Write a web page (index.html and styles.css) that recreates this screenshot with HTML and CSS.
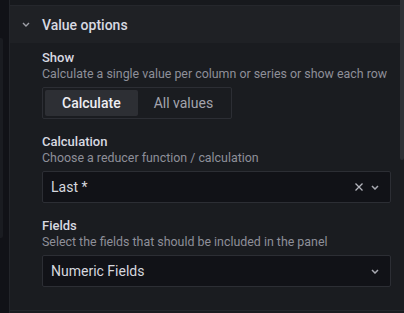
FILE: index.html
```html
<!DOCTYPE html>
<html lang="en">
<head>
    <meta charset="UTF-8">
    <meta name="viewport" content="width=device-width, initial-scale=1.0">
    <title>Value options</title>
    <link rel="stylesheet" href="styles.css">
</head>
<body>
    <div class="page">
        <div class="side">
            <div class="side-card"></div>
        </div>

        <div class="pane">
            <div class="pane-top"></div>

            <div class="category">
                <div class="category-header">
                    <svg class="chevron" width="8" height="5" viewBox="0 0 8 5">
                        <path d="M1 1 L4 4 L7 1" fill="none" stroke="#9fa0a8" stroke-width="1.4"/>
                    </svg>
                    <span>Value options</span>
                </div>

                <div class="category-body">
                    <div class="field">
                        <div class="field-label">Show</div>
                        <div class="field-desc">Calculate a single value per column or series or show each row</div>
                        <div class="radio-group">
                            <button class="radio active">Calculate</button>
                            <button class="radio">All values</button>
                        </div>
                    </div>

                    <div class="field">
                        <div class="field-label">Calculation</div>
                        <div class="field-desc">Choose a reducer function / calculation</div>
                        <div class="select">
                            <span class="select-value">Last *</span>
                            <svg class="select-clear" width="8" height="8" viewBox="0 0 8 8">
                                <path d="M0.5 0.5 L7.5 7.5 M7.5 0.5 L0.5 7.5" stroke="#b4b5bd" stroke-width="1.3"/>
                            </svg>
                            <svg class="select-arrow" width="8" height="5" viewBox="0 0 8 5">
                                <path d="M1 1 L4 4 L7 1" fill="none" stroke="#a8a9b1" stroke-width="1.5"/>
                            </svg>
                        </div>
                    </div>

                    <div class="field">
                        <div class="field-label">Fields</div>
                        <div class="field-desc">Select the fields that should be included in the panel</div>
                        <div class="select">
                            <span class="select-value">Numeric Fields</span>
                            <svg class="select-arrow" width="8" height="5" viewBox="0 0 8 5">
                                <path d="M1 1 L4 4 L7 1" fill="none" stroke="#a8a9b1" stroke-width="1.5"/>
                            </svg>
                        </div>
                    </div>
                </div>
            </div>

            <div class="scrollbar"></div>
        </div>
    </div>
</body>
</html>
```

FILE: styles.css
```css
body {
    margin: 0;
    background-color: #111217;
    font-family: Roboto, "Liberation Sans", sans-serif;
    font-size: 14px;
    color: #ccccdc;
}
.page {
    display: flex;
    height: 313px;
    overflow: hidden;
}
.side {
    width: 9px;
    border-right: 1px solid #23252a;
    background-color: #111217;
}
.side-card {
    width: 3px;
    height: 200px;
    margin-top: 38px;
    background-color: #1a1c21;
    border-radius: 0 2px 2px 0;
}
.pane {
    flex: 1;
    position: relative;
    background-color: #1a1c20;
}
.pane-top {
    height: 5px;
    background-color: #17191d;
    border-bottom: 1px solid #25272c;
}
.category {
    border-bottom: 1px solid #25272c;
}
.category-header {
    display: flex;
    align-items: center;
    height: 37px;
    background-color: #1f2125;
    font-weight: 500;
    color: #d8d9e1;
}
.chevron {
    margin-left: 12px;
    margin-right: 12px;
}
.category-body {
    padding: 7px 13px 23px 32px;
}
.field {
    margin-bottom: 15px;
}
.field:last-child {
    margin-bottom: 0;
}
.field-label {
    font-size: 13px;
    line-height: 16px;
    font-weight: 500;
    color: #d8d9e1;
}
.field-desc {
    font-size: 12.4px;
    line-height: 16px;
    color: #8e8f99;
    margin-bottom: 5px;
}
.radio-group {
    display: inline-flex;
    padding: 2px;
    height: 26px;
    border: 1px solid #2c2e34;
    border-radius: 2px;
}
.radio {
    border: none;
    background: none;
    font-family: inherit;
    font-size: 14px;
    color: #a3a4ad;
    padding: 0 16px;
    border-radius: 2px;
    cursor: pointer;
}
.radio.active {
    background-color: #2d2f34;
    color: #eeeef3;
    font-weight: 500;
    padding: 0 17px;
}
.select {
    display: flex;
    align-items: center;
    height: 30px;
    background-color: #111217;
    border: 1px solid #2c2e34;
    border-radius: 2px;
    padding: 0 11px 0 8px;
}
.select-value {
    flex: 1;
    color: #d6d7df;
}
.select-clear {
    margin-right: 8px;
}
.scrollbar {
    position: absolute;
    top: 0;
    right: 0;
    width: 4px;
    height: 160px;
    background-color: #2e3035;
    border-radius: 0 0 3px 3px;
}
```
